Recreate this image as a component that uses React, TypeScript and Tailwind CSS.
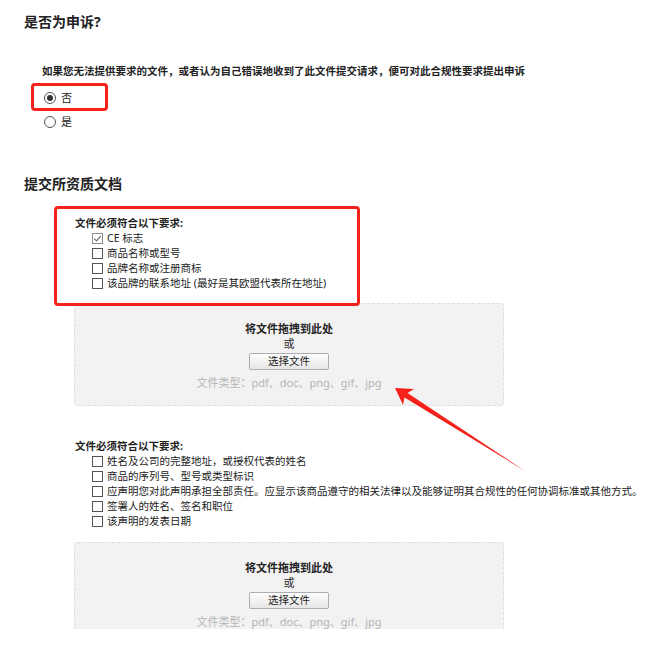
import React from 'react';

const font = { fontFamily: '"Noto Sans", "Noto Sans CJK SC", sans-serif' };

const Checkbox: React.FC<{ checked?: boolean }> = ({ checked }) => (
  <span
    className={`mr-[4px] inline-flex h-[11px] w-[11px] shrink-0 items-center justify-center border bg-white ${
      checked ? 'border-[#8a8a8a]' : 'border-[#555]'
    }`}
  >
    {checked && (
      <svg width="9" height="9" viewBox="0 0 9 9">
        <path d="M1.2 4.6 L3.5 6.9 L7.8 1.8" fill="none" stroke="#6b6b6b" strokeWidth="1.1" />
      </svg>
    )}
  </span>
);

const Radio: React.FC<{ checked?: boolean; label: string }> = ({ checked, label }) => (
  <label className="flex h-[24px] items-center text-[11px] text-[#222]">
    <span className="mr-[5px] flex h-[12px] w-[12px] items-center justify-center rounded-full border border-[#555] bg-white">
      {checked && <span className="h-[6px] w-[6px] rounded-full bg-[#333]" />}
    </span>
    {label}
  </label>
);

interface Requirement {
  text: string;
  checked?: boolean;
}

const Requirements: React.FC<{ items: Requirement[] }> = ({ items }) => (
  <div className="pl-[75px] text-[10.5px] leading-[15px] text-[#222]">
    <div className="font-bold">文件必须符合以下要求:</div>
    {items.map((item, i) => (
      <div key={i} className="flex items-center whitespace-nowrap pl-[17px]">
        <Checkbox checked={item.checked} />
        <span>{item.text}</span>
      </div>
    ))}
  </div>
);

const DropZone: React.FC<{ className?: string }> = ({ className = '' }) => (
  <div
    className={`ml-[74px] flex w-[430px] flex-col items-center rounded-[3px] border border-dashed border-[#dedede] bg-[#f2f2f2] pt-[17px] text-[11px] leading-[15px] text-[#222] ${className}`}
  >
    <div className="font-bold">将文件拖拽到此处</div>
    <div>或</div>
    <button className="mt-[2px] h-[17px] w-[80px] rounded-[2px] border border-[#adadad] bg-gradient-to-b from-[#fdfdfd] to-[#e6e6e6] text-[10.5px] leading-[15px] text-[#222]">
      选择文件
    </button>
    <div className="mt-[5px] text-[11px] text-[#b4b4b4]">文件类型：pdf、doc、png、gif、jpg</div>
  </div>
);

const App: React.FC = () => {
  const first: Requirement[] = [
    { text: 'CE 标志', checked: true },
    { text: '商品名称或型号' },
    { text: '品牌名称或注册商标' },
    { text: '该品牌的联系地址 (最好是其欧盟代表所在地址)' },
  ];
  const second: Requirement[] = [
    { text: '姓名及公司的完整地址，或授权代表的姓名' },
    { text: '商品的序列号、型号或类型标识' },
    { text: '应声明您对此声明承担全部责任。应显示该商品遵守的相关法律以及能够证明其合规性的任何协调标准或其他方式。' },
    { text: '签署人的姓名、签名和职位' },
    { text: '该声明的发表日期' },
  ];

  return (
    <div className="relative h-[658px] w-full overflow-hidden bg-white" style={font}>
      <h2 className="pl-[24px] pt-[14px] text-[14px] font-bold leading-[16px] text-[#222]">是否为申诉?</h2>

      <p className="mt-[34px] pl-[42px] text-[10.5px] font-bold leading-[15px] text-[#222]">
        如果您无法提供要求的文件，或者认为自己错误地收到了此文件提交请求，便可对此合规性要求提出申诉
      </p>

      <div className="mt-[7px] pl-[44px]">
        <Radio checked label="否" />
        <Radio label="是" />
      </div>

      <h2 className="mt-[42px] pl-[24px] text-[14px] font-bold leading-[16px] text-[#222]">提交所资质文档</h2>

      <div className="mt-[24px]">
        <Requirements items={first} />
      </div>

      <DropZone className="mt-[12px] h-[103px]" />

      <div className="mt-[33px]">
        <Requirements items={second} />
      </div>

      <DropZone className="mt-[13px] h-[87px] border-b-0 rounded-b-none" />

      {/* annotation overlays */}
      <div className="absolute left-[31px] top-[83px] h-[28px] w-[77px] rounded-[4px] border-[3px] border-[#f5221b]" />
      <div className="absolute left-[54px] top-[206px] h-[100px] w-[306px] rounded-[4px] border-[3px] border-[#f5221b]" />
      <svg className="absolute left-0 top-0" width="651" height="658" viewBox="0 0 651 658">
        <polygon
          points="395,388 414,389 407.5,393 525,471 404.5,397.5 403,405"
          fill="#f5221b"
        />
      </svg>
    </div>
  );
};

export default App;
